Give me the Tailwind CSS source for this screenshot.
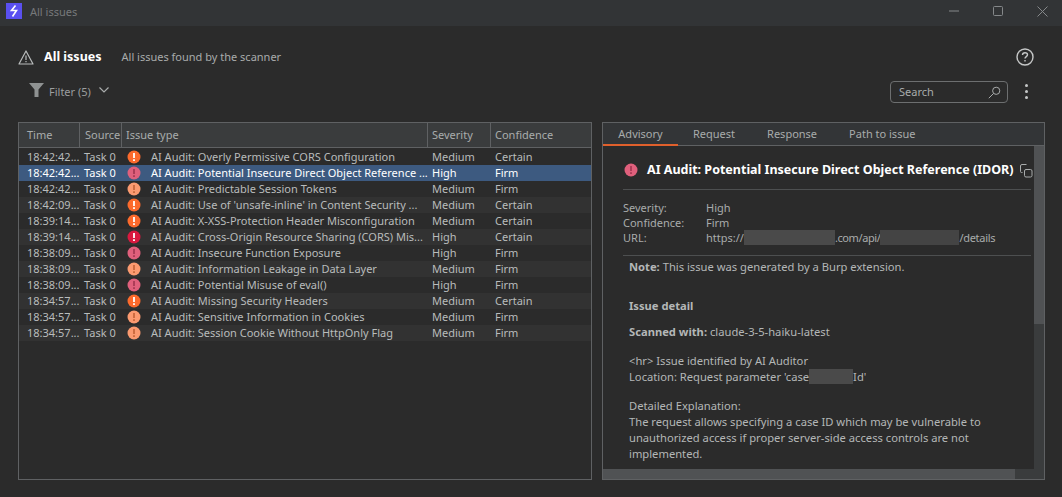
<!DOCTYPE html>
<html lang="en">
<head>
    <meta charset="UTF-8">
    <title>All issues</title>
    <script src="https://cdn.jsdelivr.net/npm/@tailwindcss/browser@4"></script>
</head>
<body class="w-[1062px] h-[497px] overflow-hidden bg-[#2b2b2b] text-[#b9bcbc] text-[11px] leading-4 font-['Noto_Sans',sans-serif]">

    <!-- Title bar -->
    <div class="h-[26px] bg-[#323436] flex items-start pt-[3px]">
        <div class="ml-[6px] w-4 h-4 bg-[#5a50f0] flex items-center justify-center">
            <svg width="10" height="12" viewBox="0 0 10 12" fill="none" stroke="#ffffff" stroke-width="1.6"><path d="M6.5 0.5 L2.5 5.5 H7.5 L3.5 11.5"/></svg>
        </div>
        <span class="ml-[8px] mt-[1px] text-[#77797b]">All issues</span>
        <div class="ml-auto h-4 flex items-center gap-[34px] mr-[14px]">
            <svg width="10" height="2" viewBox="0 0 10 2"><path d="M0 1H10" stroke="#85888a"/></svg>
            <svg width="10" height="10" viewBox="0 0 10 10" fill="none"><rect x="0.5" y="0.5" width="9" height="9" rx="1" stroke="#85888a"/></svg>
            <svg width="11" height="11" viewBox="0 0 11 11" fill="none"><path d="M0.5 0.5L10.5 10.5M10.5 0.5L0.5 10.5" stroke="#85888a"/></svg>
        </div>
    </div>

    <!-- Heading -->
    <div class="h-[44px] flex items-center pl-[18px] pr-[28px] pt-[18px]">
        <svg width="16" height="15" viewBox="0 0 16 15" fill="none" stroke="#b9bcbc" stroke-width="1.2"><path d="M8 1L15 14H1Z" stroke-linejoin="round"/><path d="M8 5.5V10M8 11V12.2"/></svg>
        <span class="ml-[10px] text-[12.5px] font-bold text-white">All issues</span>
        <span class="ml-[20px] text-[#a9acac]">All issues found by the scanner</span>
        <svg class="ml-auto" width="18" height="18" viewBox="0 0 18 18" fill="none" stroke="#c5c7c7" stroke-width="1.4"><circle cx="9" cy="9" r="8"/><path d="M6.5 7C6.5 5.5 7.6 4.7 9 4.7C10.4 4.7 11.5 5.5 11.5 6.8C11.5 8.6 9 8.6 9 10.6M9 12V13.5"/></svg>
    </div>

    <!-- Filter and search -->
    <div class="h-[52px] flex items-start pl-[29px] pr-[34px] pt-[12px]">
        <svg class="mt-[1px]" width="15" height="14" viewBox="0 0 15 14"><path d="M0 0H15L9.5 6.5V14H5.5V6.5Z" fill="#8f9292"/></svg>
        <span class="ml-[5px] mt-[2px] text-[#9b9e9e]">Filter (5)</span>
        <svg class="ml-[8px] mt-[5px]" width="10" height="6" viewBox="0 0 10 6" fill="none" stroke="#a9acac" stroke-width="1.2"><path d="M0.5 0.5L5 5L9.5 0.5"/></svg>
        <div class="ml-auto w-[118px] h-[22px] border border-[#6d6f70] rounded-[4px] flex items-center pl-[8px] pr-[6px] -mt-[1px]">
            <span class="text-[#a9acac]">Search</span>
            <svg class="ml-auto" width="13" height="13" viewBox="0 0 13 13" fill="none" stroke="#a9acac"><circle cx="8.2" cy="4.8" r="3.6"/><path d="M5.5 7.5L0.8 12.2"/></svg>
        </div>
        <div class="ml-[17px] mt-[2px] flex flex-col gap-[3px]">
            <div class="w-[3px] h-[3px] rounded-full bg-[#c5c7c7]"></div>
            <div class="w-[3px] h-[3px] rounded-full bg-[#c5c7c7]"></div>
            <div class="w-[3px] h-[3px] rounded-full bg-[#c5c7c7]"></div>
        </div>
    </div>

    <div class="flex pl-[18px] gap-[10px]">
        <!-- Issues table -->
        <div class="w-[574px] h-[358px] border border-[#5f6163] bg-[#2b2b2b]">
            <div class="h-[25px] bg-[#3a3c3d] border-b border-[#5f6163] grid grid-cols-[61px_42px_306px_63px_1fr] text-[#a9acac]">
                <div class="pl-[8px] leading-[24px] border-r border-[#5f6163]">Time</div>
                <div class="pl-[5px] leading-[24px] border-r border-[#5f6163]">Source</div>
                <div class="pl-[4px] leading-[24px] border-r border-[#5f6163]">Issue type</div>
                <div class="pl-[4px] leading-[24px] border-r border-[#5f6163]">Severity</div>
                <div class="pl-[4px] leading-[24px]">Confidence</div>
            </div>
            <div id="rows" class="pt-[1px]"></div>
        </div>

        <!-- Advisory panel -->
        <div class="w-[443px] h-[358px] border border-[#5f6163] flex flex-col">
            <div class="h-[23px] bg-[#333537] border-b border-[#5f6163] flex shrink-0 text-[#a9acac]">
                <div class="w-[75px] h-[23px] text-center leading-[22px] border-b-2 border-[#e0602c]">Advisory</div>
                <div class="ml-[15px] leading-[22px]">Request</div>
                <div class="ml-[32px] leading-[22px]">Response</div>
                <div class="ml-[32px] leading-[22px]">Path to issue</div>
            </div>
            <div class="flex flex-1 min-h-0">
                <div class="w-[431px] h-[323px] overflow-hidden pl-[20px] pr-[3px]">
                    <div class="flex items-center h-[20px] mt-[14px] whitespace-nowrap">
                        <svg class="ml-[1px] shrink-0" width="14" height="14" viewBox="0 0 14 14"><circle cx="7" cy="7" r="6.5" fill="#e0607c"/><rect x="6.1" y="3" width="1.8" height="5" fill="#a83a55"/><rect x="6.1" y="9.2" width="1.8" height="1.8" fill="#a83a55"/></svg>
                        <span class="ml-[9px] text-[12.5px] font-bold text-white">AI Audit: Potential Insecure Direct Object Reference (IDOR)</span>
                        <svg class="ml-[7px] mt-[2px] shrink-0" width="13" height="14" viewBox="0 0 13 14" fill="none" stroke="#a9acac"><rect x="4.5" y="5.5" width="7.5" height="7.5" rx="1.5"/><path d="M2.5 8.5H1.5A1 1 0 0 1 0.5 7.5V2A1.5 1.5 0 0 1 2 0.5H6.5"/></svg>
                    </div>
                    <div class="border-t border-[#4d4f50] mt-[9px] pt-[10px] grid grid-cols-[83px_1fr] leading-[15px] text-[#a9acac]">
                        <span>Severity:</span><span>High</span>
                        <span>Confidence:</span><span>Firm</span>
                        <span>URL:</span>
                        <span class="flex">https://<span class="w-[91px] h-[15px] bg-[#4a4a4a]"></span><span class="tracking-[-0.4px]">.com/api/</span><span class="w-[79px] h-[15px] bg-[#444444]"></span><span class="tracking-[-0.3px]">/details</span></span>
                    </div>
                    <div class="border-t border-[#4d4f50] mt-[10px] pl-[6px] text-[11.2px] text-[#b4b7b7]">
                        <p class="mt-[3px]"><b class="font-bold">Note:</b> This issue was generated by a Burp extension.</p>
                        <p class="mt-[23px] font-bold">Issue detail</p>
                        <p class="mt-[10px]"><b class="font-bold">Scanned with:</b> claude-3-5-haiku-latest</p>
                        <p class="mt-[13px]">&lt;hr&gt; Issue identified by AI Auditor</p>
                        <p class="flex">Location: Request parameter 'case<span class="w-[44px] h-[15px] bg-[#4a4a4a]"></span>Id'</p>
                        <p class="mt-[13px]">Detailed Explanation:</p>
                        <p class="w-[370px]">The request allows specifying a case ID which may be vulnerable to unauthorized access if proper server-side access controls are not implemented.</p>
                    </div>
                </div>
                <div class="w-[10px] h-[323px] bg-[#3a3c3d]">
                    <div class="w-[10px] h-[178px] bg-[#505254]"></div>
                </div>
            </div>
            <div class="h-[10px] bg-[#3a3c3d] shrink-0">
                <div class="w-[412px] h-[10px] bg-[#505254]"></div>
            </div>
        </div>
    </div>

    <script>
        const colours = {
            'Medium Certain': ['#fc6a2c', '#ffffff'],
            'High Firm': ['#e0607c', '#a83a55'],
            'Medium Firm': ['#fb9a70', '#c8683c'],
            'High Certain': ['#d9183f', '#ffffff']
        };
        const issues = [
            ['18:42:42...', 'AI Audit: Overly Permissive CORS Configuration', 'Medium', 'Certain'],
            ['18:42:42...', 'AI Audit: Potential Insecure Direct Object Reference ...', 'High', 'Firm'],
            ['18:42:42...', 'AI Audit: Predictable Session Tokens', 'Medium', 'Firm'],
            ['18:42:09...', "AI Audit: Use of 'unsafe-inline' in Content Security ...", 'Medium', 'Certain'],
            ['18:39:14...', 'AI Audit: X-XSS-Protection Header Misconfiguration', 'Medium', 'Certain'],
            ['18:39:14...', 'AI Audit: Cross-Origin Resource Sharing (CORS) Mis...', 'High', 'Certain'],
            ['18:38:09...', 'AI Audit: Insecure Function Exposure', 'High', 'Firm'],
            ['18:38:09...', 'AI Audit: Information Leakage in Data Layer', 'Medium', 'Firm'],
            ['18:38:09...', 'AI Audit: Potential Misuse of eval()', 'High', 'Firm'],
            ['18:34:57...', 'AI Audit: Missing Security Headers', 'Medium', 'Certain'],
            ['18:34:57...', 'AI Audit: Sensitive Information in Cookies', 'Medium', 'Firm'],
            ['18:34:57...', 'AI Audit: Session Cookie Without HttpOnly Flag', 'Medium', 'Firm']
        ];
        document.getElementById('rows').innerHTML = issues.map((row, i) => {
            const [fill, mark] = colours[row[2] + ' ' + row[3]];
            const rowClass = i === 1 ? 'bg-[#3d5a80] text-white' : i % 2 ? 'bg-[#323232]' : 'bg-[#2b2b2b]';
            return `<div class="h-[16px] grid grid-cols-[61px_42px_306px_63px_1fr] ${rowClass}">
                <div class="pl-[8px]">${row[0]}</div>
                <div class="pl-[4px]">Task 0</div>
                <div class="flex items-center pl-[5px]">
                    <svg width="14" height="14" viewBox="0 0 14 14"><circle cx="7" cy="7" r="6.5" fill="${fill}"/><rect x="6.1" y="3" width="1.8" height="5" fill="${mark}"/><rect x="6.1" y="9.2" width="1.8" height="1.8" fill="${mark}"/></svg>
                    <span class="ml-[10px] whitespace-nowrap">${row[1]}</span>
                </div>
                <div class="pl-[4px]">${row[2]}</div>
                <div class="pl-[4px]">${row[3]}</div>
            </div>`;
        }).join('');
    </script>
</body>
</html>
